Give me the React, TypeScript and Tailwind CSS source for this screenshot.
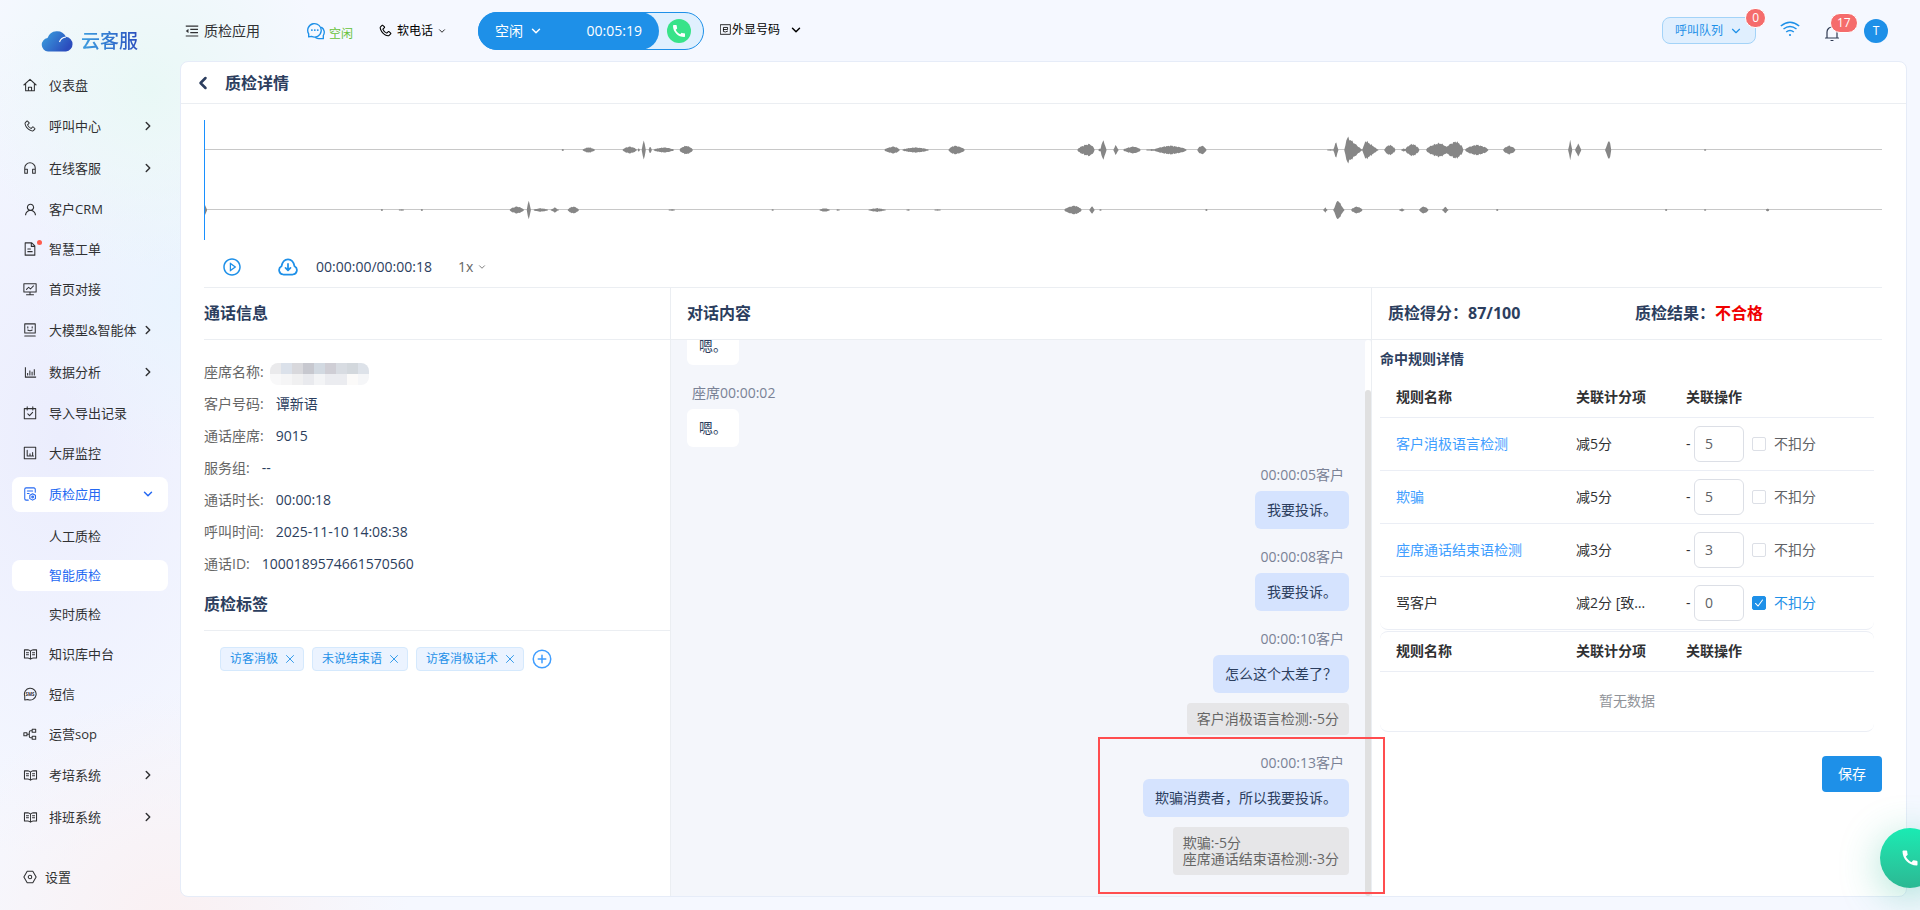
import React, { useState } from 'react';
import { ChevronDown, ChevronLeft, ChevronRight, X } from 'lucide-react';
import {
  AiOutlineBarChart,
  AiOutlineMenuFold,
  AiOutlinePhone,
  AiOutlinePlayCircle,
  AiOutlineRead,
  AiOutlineUser,
} from 'react-icons/ai';
import { MdCall } from 'react-icons/md';

const Svg: React.FC<{ className?: string; children: React.ReactNode }> = ({ className = 'size-[14px]', children }) => (
  <svg
    viewBox="0 0 16 16"
    className={className}
    fill="none"
    stroke="currentColor"
    strokeWidth="1.2"
    strokeLinecap="round"
    strokeLinejoin="round"
    aria-hidden="true"
  >
    {children}
  </svg>
);

const icons = {
  home: (
    <Svg>
      <path d="M1 8 8 1.5 15 8M3 6.8V14.5h10V6.8M6.2 14.5v-4h3.6v4" />
    </Svg>
  ),
  phone: <AiOutlinePhone className="size-[14px] -scale-x-100" />,
  headset: (
    <Svg>
      <path d="M2 14V8a6 6 0 0 1 12 0v6M2 9.5h3V14H2zM11 9.5h3V14h-3z" />
    </Svg>
  ),
  user: <AiOutlineUser className="size-[15px]" />,
  file: (
    <Svg>
      <path d="M2.5 1h7.5l3.5 3.5V15h-11zM9.5 1v4h4M5.5 8h3M5.5 11h5" />
    </Svg>
  ),
  monitor: (
    <Svg>
      <path d="M1 2h14v9.5H1zM4 8.5l2.5-2.5 2 2L12 4.5M8 11.5v3M4 14.5h8" />
    </Svg>
  ),
  robot: (
    <Svg>
      <path d="M2 1h12v10.5H2zM2 14.8h12M5.5 4.2v1.4M10.5 4.2v1.4M5.5 8q2.5 1.6 5 0" />
    </Svg>
  ),
  chart: <AiOutlineBarChart className="size-[15px]" />,
  calendar: (
    <Svg>
      <path d="M1.5 3h13v11.5h-13zM4.8 1v3.5M11.2 1v3.5M5.5 9l2 2 3.5-3.8" />
    </Svg>
  ),
  screen: (
    <Svg>
      <path d="M1.5 1.5h13v13h-13zM4.8 5v6.5M8 9v2.5M11 7.5v4M4.8 11.5H12" />
    </Svg>
  ),
  quality: (
    <Svg>
      <path d="M6 15H3.5a1.5 1.5 0 0 1-1.5-1.5v-11A1.5 1.5 0 0 1 3.5 1h9A1.5 1.5 0 0 1 14 2.5V6M5 4.5h6M5 7.5h2" />
      <path d="m11 7.8 3.2 1.7v3.8L11 15l-3.200-1.700V9.500z" />
      <circle cx="11" cy="11.4" r="1" />
    </Svg>
  ),
  book: <AiOutlineRead className="size-[15px]" />,
  sms: (
    <Svg>
      <path d="M2 14.800V10.500A6.700 6.700 0 1 1 5.500 14.300z" />
      <text x="8" y="10" fontSize="5" fontWeight="700" textAnchor="middle" fill="currentColor" stroke="none">
        SMS
      </text>
    </Svg>
  ),
  flow: (
    <Svg>
      <path d="M1 6.500h3.500V10H1zM10.500 2.500H14.500V6h-4zM10.500 10.500H14.500V14h-4zM4.500 8.200h2.700M10.500 4.200H8.700Q7.200 4.200 7.200 6v4.500q0 1.800 1.500 1.800h1.800" />
    </Svg>
  ),
};

type MenuItem = {
  name: string;
  icon: keyof typeof icons;
  group?: boolean;
  dot?: boolean;
  children?: string[];
};

const menu: MenuItem[] = [
  { name: '仪表盘', icon: 'home' },
  { name: '呼叫中心', icon: 'phone', group: true },
  { name: '在线客服', icon: 'headset', group: true },
  { name: '客户CRM', icon: 'user' },
  { name: '智慧工单', icon: 'file', dot: true },
  { name: '首页对接', icon: 'monitor' },
  { name: '大模型&智能体', icon: 'robot', group: true },
  { name: '数据分析', icon: 'chart', group: true },
  { name: '导入导出记录', icon: 'calendar' },
  { name: '大屏监控', icon: 'screen' },
  { name: '质检应用', icon: 'quality', group: true, children: ['人工质检', '智能质检', '实时质检'] },
  { name: '知识库中台', icon: 'book' },
  { name: '短信', icon: 'sms' },
  { name: '运营sop', icon: 'flow' },
  { name: '考培系统', icon: 'book', group: true },
  { name: '排班系统', icon: 'book', group: true },
];

const callInfo = [
  ['客户号码:', '谭新语'],
  ['通话座席:', '9015'],
  ['服务组:', '--'],
  ['通话时长:', '00:00:18'],
  ['呼叫时间:', '2025-11-10 14:08:38'],
  ['通话ID:', '1000189574661570560'],
];

const messages = [
  { agent: true, time: '', text: '嗯。' },
  { agent: true, time: '00:00:02', text: '嗯。' },
  { agent: false, time: '00:00:05', text: '我要投诉。' },
  { agent: false, time: '00:00:08', text: '我要投诉。' },
  { agent: false, time: '00:00:10', text: '怎么这个太差了？', notes: ['客户消极语言检测:-5分'] },
  {
    agent: false,
    time: '00:00:13',
    text: '欺骗消费者，所以我要投诉。',
    notes: ['欺骗:-5分', '座席通话结束语检测:-3分'],
  },
];

const initialRules = [
  { name: '客户消极语言检测', score: '减5分', value: '5', skip: false, link: true },
  { name: '欺骗', score: '减5分', value: '5', skip: false, link: true },
  { name: '座席通话结束语检测', score: '减3分', value: '3', skip: false, link: true },
  { name: '骂客户', score: '减2分 [致命项]', value: '0', skip: true, link: false },
];

// [start, width, amplitude, peak position 0..1]
type Burst = [number, number, number, number];

const agentWave: Burst[] = [
  [357, 2, 1, 0.5], [378, 12, 3, 0.5], [418, 14, 4, 0.5], [433, 2, 2, 0.5], [437, 4, 13, 0.5], [444, 3, 5, 0.5],
  [449, 20, 3, 0.5], [475, 13, 5, 0.5], [680, 15, 4, 0.6], [698, 26, 3, 0.5], [744, 16, 5, 0.4],
  [873, 17, 7, 0.7], [894, 3, 2, 0.5], [896, 6, 13, 0.4], [909, 5, 6, 0.4], [919, 17, 4, 0.6], [942, 12, 1, 0.5],
  [950, 32, 5, 0.5], [993, 9, 5, 0.5], [1123, 6, 1, 0.5], [1129, 5, 10, 0.5], [1140, 18, 15, 0.15],
  [1158, 16, 11, 0.2], [1180, 11, 6, 0.5], [1197, 5, 2, 0.5], [1201, 14, 7, 0.5], [1222, 22, 8, 0.6],
  [1241, 18, 10, 0.6], [1261, 23, 6, 0.5], [1299, 12, 5, 0.5], [1364, 4, 12, 0.5], [1371, 6, 8, 0.5],
  [1401, 6, 13, 0.7], [1500, 2, 1, 0.5],
];

const customerWave: Burst[] = [
  [0, 2, 6, 0], [176, 2, 1, 0.5], [194, 5, 1, 0.5], [216, 2, 1, 0.5], [305, 14, 4, 0.5], [322, 4, 12, 0.5],
  [329, 14, 2, 0.5], [346, 8, 3, 0.5], [363, 11, 4, 0.5], [464, 6, 1, 0.5], [567, 2, 1, 0.5], [615, 10, 2, 0.5],
  [632, 3, 1, 0.5], [664, 17, 2, 0.5], [702, 3, 1, 0.5], [730, 6, 1, 0.5], [860, 17, 5, 0.6], [885, 5, 5, 0.5],
  [895, 2, 1, 0.5], [1001, 2, 1, 0.5], [1119, 4, 3, 0.5], [1129, 11, 12, 0.4], [1147, 11, 4, 0.5],
  [1195, 5, 2, 0.5], [1215, 9, 4, 0.5], [1238, 6, 4, 0.5], [1292, 2, 1, 0.5], [1461, 2, 1, 0.5],
  [1500, 2, 1, 0.5], [1562, 3, 2, 0.5],
];

const wavePath = (bursts: Burst[], mid: number) =>
  bursts
    .map(([start, width, amp, peak]) => {
      const top: string[] = [];
      const bottom: string[] = [];
      for (let i = 0; i <= width; i++) {
        const t = i / width;
        const slope = t < peak ? t / peak : (1 - t) / (1 - peak || 1);
        const env = width > 8 && amp < 11 ? Math.sqrt(slope) : slope;
        const noise = 0.85 + 0.15 * Math.sin((start + i) * 2.3) * Math.cos((start + i) * 0.7);
        const h = Math.max(0.5, amp * env * noise);
        top.push(`${start + i} ${mid - h}`);
        bottom.unshift(`${start + i} ${mid + h}`);
      }
      return `M${top.concat(bottom).join('L')}Z`;
    })
    .join('');

const Waveform: React.FC = () => (
  <div className="h-[120px] border-l border-[#1890ff]">
    <svg viewBox="0 0 1678 120" preserveAspectRatio="none" className="h-full w-full" aria-hidden="true">
      <path d="M0 29.500H1678M0 89.500H1678" stroke="#c8c8c8" strokeWidth="1" />
      <path d={wavePath(agentWave, 30)} fill="#868686" />
      <path d={wavePath(customerWave, 90)} fill="#868686" />
    </svg>
  </div>
);

const Sidebar: React.FC = () => (
  <aside className="flex w-[180px] shrink-0 flex-col px-3 pb-[13px]">
    <div className="flex h-[65px] items-center gap-2 pt-4 pl-[29px]">
      <svg viewBox="0 0 32 22" className="h-[22px] w-8" aria-hidden="true">
        <defs>
          <linearGradient id="cloud" x1="0" y1="0" x2="1" y2="0.5">
            <stop offset="0" stopColor="#3ba3e0" />
            <stop offset="1" stopColor="#2b4cbd" />
          </linearGradient>
        </defs>
        <path
          d="M7 21.500A6.800 6.800 0 0 1 6.500 8 10 10 0 0 1 25 6.800 7.400 7.400 0 0 1 25 21.500z"
          fill="url(#cloud)"
        />
        <path d="M18.500 12Q20 7.500 25 7" stroke="#fff" strokeWidth="1.2" fill="none" />
      </svg>
      <span className="bg-linear-to-r from-[#3f9fe0] to-[#2c4fbe] bg-clip-text text-[19px] leading-6 font-medium text-transparent">
        云客服
      </span>
    </div>
    <nav className="text-[13px] text-[#303133]">
      {menu.map((item) => (
        <div key={item.name}>
          <div className={item.group ? 'flex h-[42px] items-center' : 'flex h-10 items-center'}>
            <button
              type="button"
              className={
                item.children
                  ? 'flex h-[35px] w-full items-center rounded-lg bg-white pl-[11px] text-[#2468f2]'
                  : 'flex h-[35px] w-full items-center rounded-lg pl-[11px]'
              }
            >
              <span className="relative flex w-[26px] shrink-0">
                {icons[item.icon]}
                {item.dot && <i className="absolute -top-0.5 left-[14px] size-[5px] rounded-full bg-[#ff5b4c]" />}
              </span>
              <span className="whitespace-nowrap">{item.name}</span>
              {item.group &&
                (item.children ? (
                  <ChevronDown className="mr-[13px] ml-auto size-3.5" strokeWidth={2.5} />
                ) : (
                  <ChevronRight className="mr-[13px] ml-auto size-3.5 shrink-0" strokeWidth={2.5} />
                ))}
            </button>
          </div>
          {item.children && (
            <div className="flex flex-col gap-2 pt-1.5 pb-1">
              {item.children.map((child) => (
                <button
                  key={child}
                  type="button"
                  className={
                    child === '智能质检'
                      ? 'h-[31px] rounded-lg bg-white pl-[37px] text-left text-[#2468f2]'
                      : 'h-[31px] rounded-lg pl-[37px] text-left'
                  }
                >
                  {child}
                </button>
              ))}
            </div>
          )}
        </div>
      ))}
    </nav>
    <button type="button" className="mt-auto flex h-10 items-center gap-2 pl-[11px] text-[13px] text-[#303133]">
      <Svg>
        <path d="M4.800 1.500h6.400L15 8l-3.800 6.500H4.800L1 8z" />
        <circle cx="8" cy="8" r="2" />
      </Svg>
      设置
    </button>
  </aside>
);

const TopBar: React.FC = () => (
  <header className="flex h-[61px] shrink-0 items-center text-xs text-black">
    <button type="button" className="ml-1 flex w-[123px] items-center gap-1 text-sm text-[#303133]">
      <AiOutlineMenuFold className="size-4" />
      质检应用
    </button>
    <div className="flex w-[71px] items-center gap-1 text-[#67c23a]">
      <Svg className="size-[18px] text-[#1e90e8]">
        <path d="M1.500 13.200V10.500A6 6 0 1 1 4 12.800zM13 4.800A5.200 5.200 0 0 1 14.500 12V14.800H11A5 5 0 0 1 7.800 14" />
        <path d="M4.300 7.200h.1M6.900 7.200h.1M9.500 7.200h.1" strokeWidth="1.6" />
      </Svg>
      <span className="pt-1.5">空闲</span>
    </div>
    <button type="button" className="flex w-[100px] items-center gap-1">
      <AiOutlinePhone className="size-[15px] -scale-x-100" />
      软电话
      <ChevronDown className="size-2.5" />
    </button>
    <div className="flex h-[38px] w-[226px] items-center rounded-full border border-[#1e90e8] bg-[#e0f0fe]">
      <button
        type="button"
        className="-ml-px flex h-[38px] w-[181px] items-center rounded-full bg-[#1e90e8] px-[17px] text-sm text-white"
      >
        空闲
        <ChevronDown className="ml-1.5 size-3.5" strokeWidth={2.5} />
        <span className="ml-auto">00:05:19</span>
      </button>
      <button
        type="button"
        aria-label="拨打"
        className="ml-2 flex size-6 items-center justify-center rounded-full bg-[#38e389] text-white"
      >
        <MdCall className="size-4" />
      </button>
    </div>
    <button type="button" className="ml-4 flex items-center gap-px pb-0.5">
      <Svg className="size-[11px]">
        <path d="M1 1h14v14H1zM5 8h6V5H5v6q3 1.500 6-.5" />
      </Svg>
      外显号码
      <ChevronDown className="ml-2 size-3.5" strokeWidth={2.5} />
    </button>

    <div className="mr-[19px] ml-auto flex items-center">
      <button
        type="button"
        className="relative flex h-[27px] w-[94px] items-center justify-between rounded-lg border border-[#a3d3f8] bg-[#e0effe] px-3 text-[#1e90e8]"
      >
        呼叫队列
        <ChevronDown className="size-3.5" />
        <span className="absolute -top-[10px] -right-[11px] flex h-5 items-center rounded-full border border-white bg-[#f56c6c] px-1.5 text-white">
          0
        </span>
      </button>
      <svg viewBox="0 0 20 16" className="mb-1 ml-6 h-4 w-5" fill="none" stroke="#1e90e8" strokeWidth="1.5" aria-label="网络">
        <path d="M.8 5Q10-2.500 19.200 5M3.500 8Q10 2.800 16.500 8M6.200 11Q10 8 13.800 11" />
        <circle cx="10" cy="14" r="1.1" fill="#1e90e8" stroke="none" />
      </svg>
      <button type="button" aria-label="通知" className="relative ml-6 pt-1">
        <Svg className="size-4 text-[#2f3a52]">
          <path d="M1.500 13h13M3 13V7a5 5 0 0 1 10 0v6M7 15.500h2" />
        </Svg>
        <span className="absolute -top-2 left-1.5 flex h-5 items-center rounded-full border border-white bg-[#f56c6c] px-1.5 text-white">
          17
        </span>
      </button>
      <span className="ml-6 flex size-6 items-center justify-center rounded-full bg-[#1e90e8] text-white">T</span>
    </div>
  </header>
);

const CallInfo: React.FC = () => (
  <section className="w-[467px] shrink-0 border-r border-[#ebeef2]">
    <h2 className="flex h-[52px] items-center border-b border-[#ebeef2] pb-0.5 text-base font-bold">通话信息</h2>
    <dl className="pt-4">
      <div className="flex h-8 items-center">
        <dt className="text-[#666]">座席名称:</dt>
        <dd className="mt-1 ml-1.5 grid grid-cols-9 overflow-hidden rounded-lg" aria-label="已隐藏">
          <i className="h-[11px] w-[11px] bg-[#eaeaec]" />
          <i className="bg-[#dbe1ea]" />
          <i className="bg-[#d8d8dc]" />
          <i className="bg-[#c7c8cf]" />
          <i className="bg-[#d2d9e1]" />
          <i className="bg-[#cfced5]" />
          <i className="bg-[#d8dce2]" />
          <i className="bg-[#d3d8dd]" />
          <i className="bg-[#dde2e9]" />
          <i className="h-[11px] bg-[#f8f8f9]" />
          <i className="bg-[#f5f5f6]" />
          <i className="bg-[#f0f0f1]" />
          <i className="bg-[#e9eaee]" />
          <i className="bg-[#f3f4f6]" />
          <i className="bg-[#ebecf0]" />
          <i className="bg-[#ebecf0]" />
          <i className="bg-[#fbfaf9]" />
          <i className="bg-[#f5f6f8]" />
        </dd>
      </div>
      {callInfo.map(([label, value]) => (
        <div key={label} className="flex h-8 items-center">
          <dt className="text-[#666]">{label}</dt>
          <dd className="ml-3">{value}</dd>
        </div>
      ))}
    </dl>
    <h2 className="flex h-[51px] items-center border-b border-[#ebeef2] pb-0.5 text-base font-bold">质检标签</h2>
    <div className="flex flex-wrap items-center gap-2 px-4 py-4">
      {['访客消极', '未说结束语', '访客消极话术'].map((tag) => (
        <span
          key={tag}
          className="flex h-6 items-center gap-[5px] rounded border border-[#d5e9fd] bg-[#ebf3ff] pr-[6px] pl-[9px] text-xs text-[#1e90e8]"
        >
          {tag}
          <button type="button" aria-label={`删除${tag}`}>
            <X className="size-3.5" strokeWidth={1.5} />
          </button>
        </span>
      ))}
      <button type="button" aria-label="添加标签" className="text-[#409eff]">
        <Svg className="size-5">
          <circle cx="8" cy="8" r="7" />
          <path d="M8 5v6M5 8h6" />
        </Svg>
      </button>
    </div>
  </section>
);

const Dialog: React.FC = () => (
  <section className="relative flex min-w-0 flex-1 flex-col border-r border-[#ebeef2]">
    <h2 className="flex h-[52px] shrink-0 items-center border-b border-[#ebeef2] pb-0.5 pl-4 text-base font-bold">
      对话内容
    </h2>
    <div className="flex min-h-0 flex-1 bg-[#f4f6fb]">
      <div className="flex flex-1 flex-col justify-end overflow-hidden px-4 pb-[21px]">
        {messages.map((msg, index) => (
          <div
            key={index}
            className={msg.agent ? 'flex flex-col items-start pt-[18px]' : 'flex flex-col items-end pt-[18px]'}
          >
            {msg.time && (
              <div className="mb-1.5 px-[5px] leading-5 text-[#7a8296]">
                {msg.agent ? `座席${msg.time}` : `${msg.time}客户`}
              </div>
            )}
            <p
              className={
                msg.agent
                  ? 'flex h-[38px] items-center rounded-md bg-white px-3'
                  : 'flex h-[38px] items-center rounded-md bg-[#d5e3fe] px-3'
              }
            >
              {msg.text}
            </p>
            {msg.notes && (
              <div className="mt-2.5 rounded bg-[#e6e6e8] px-2.5 py-2 leading-4 text-[#666]">
                {msg.notes.map((note) => (
                  <p key={note}>{note}</p>
                ))}
              </div>
            )}
          </div>
        ))}
      </div>
      <div className="flex w-1.5 flex-col rounded-full bg-white pt-[50px]">
        <div className="flex-1 rounded-full bg-[#e0e0e0]" />
      </div>
    </div>
    {/* highlighted hit */}
    <div className="absolute -right-[14px] bottom-0.5 z-10 h-[157px] w-[287px] border-2 border-[#ff4d4f]" />
  </section>
);

const TableHead: React.FC = () => (
  <thead>
    <tr className="h-[39px] border-b border-[#ebeef5] text-left">
      <th className="w-[180px] pl-4 font-bold">规则名称</th>
      <th className="w-[110px] pl-4 font-bold">关联计分项</th>
      <th className="pl-4 font-bold">关联操作</th>
    </tr>
  </thead>
);

const Rules: React.FC = () => {
  const [rules, setRules] = useState(initialRules);

  const update = (index: number, patch: Partial<(typeof initialRules)[number]>) => {
    setRules((prev) => prev.map((rule, i) => (i === index ? { ...rule, ...patch } : rule)));
  };

  return (
    <section className="w-[510px] shrink-0">
      <div className="grid h-[52px] grid-cols-2 items-center border-b border-[#ebeef2] pb-0.5 pl-4 text-base font-bold">
        <p>质检得分：87/100</p>
        <p>
          质检结果：<span className="text-[#f00000]">不合格</span>
        </p>
      </div>
      <div className="px-2">
        <h3 className="flex h-[38px] items-center font-bold">命中规则详情</h3>
        <div className="overflow-hidden rounded-lg border-b border-[#ebeef5]">
          <table className="w-full table-fixed text-[#303133]">
            <TableHead />
            <tbody>
              {rules.map((rule, index) => (
                <tr key={rule.name} className="h-[53px] border-b border-[#ebeef5] last:border-b-0">
                  <td className="pl-4">
                    {rule.link ? (
                      <a href="#rule" className="text-[#409eff]">
                        {rule.name}
                      </a>
                    ) : (
                      rule.name
                    )}
                  </td>
                  <td className="truncate pr-5 pl-4">{rule.score}</td>
                  <td className="pl-4">
                    <div className="flex items-center">
                      <span className="w-2 shrink-0">-</span>
                      <input
                        type="text"
                        aria-label={`${rule.name}扣分`}
                        value={rule.value}
                        onChange={(e) => update(index, { value: e.target.value })}
                        className="h-9 w-[50px] rounded-md border border-[#dcdfe6] bg-white px-2.5 text-[#606266] outline-none"
                      />
                      <label className="ml-2 flex items-center gap-2 text-[#606266] has-checked:text-[#1e90e8]">
                        <span className="relative flex">
                          <input
                            type="checkbox"
                            checked={rule.skip}
                            onChange={(e) => update(index, { skip: e.target.checked })}
                            className="peer size-3.5 appearance-none rounded-xs border border-[#dcdfe6] bg-white checked:border-[#1e90e8] checked:bg-[#1e90e8]"
                          />
                          <Svg className="pointer-events-none absolute inset-0 hidden size-3.5 text-white peer-checked:block">
                            <path d="m4 8.500 3 3 5-7" />
                          </Svg>
                        </span>
                        不扣分
                      </label>
                    </div>
                  </td>
                </tr>
              ))}
            </tbody>
          </table>
        </div>
        <div className="mt-px overflow-hidden rounded-lg border-y border-[#ebeef5]">
          <table className="w-full table-fixed text-[#303133]">
            <TableHead />
            <tbody>
              <tr className="h-[60px] text-center text-[#909399]">
                <td colSpan={3}>暂无数据</td>
              </tr>
            </tbody>
          </table>
        </div>
      </div>
      <div className="mt-6 flex justify-end">
        <button type="button" className="h-9 w-[60px] rounded bg-[#1e90e8] text-white">
          保存
        </button>
      </div>
    </section>
  );
};

const App: React.FC = () => {
  return (
    <div className="relative flex h-screen overflow-hidden bg-[#f5f8ff] bg-[radial-gradient(circle_at_150px_90px,#e9f8f6_0px,#e9f8f600_180px),radial-gradient(circle_at_170px_930px,#faf0f2_0px,#faf0f200_240px),radial-gradient(circle_at_190px_300px,#e9f4fe_0px,#e9f4fe00_160px),radial-gradient(ellipse_260px_420px_at_60px_440px,#ebedfd_0px,#ebedfd00_100%)] font-['Open_Sans','Noto_Sans_CJK_SC',sans-serif] text-sm text-[#2c3e5e]">
      <Sidebar />
      <div className="flex min-w-0 flex-1 flex-col pr-[13px] pb-[13px]">
        <TopBar />
        <main className="flex min-h-0 flex-1 flex-col overflow-hidden rounded-lg border border-[#e6ecf8] bg-white">
          <div className="flex h-[42px] shrink-0 items-center border-b border-[#ebeef2]">
            <button type="button" aria-label="返回" className="ml-3 flex w-8">
              <ChevronLeft className="size-5" strokeWidth={3} />
            </button>
            <h1 className="text-base font-bold">质检详情</h1>
          </div>
          <div className="flex min-h-0 flex-1 flex-col pt-4 pr-6 pl-[23px]">
            <Waveform />
            <div className="flex h-[47px] shrink-0 items-center pt-1.5">
              <button type="button" aria-label="播放" className="ml-[18px] text-[#1e90e8]">
                <AiOutlinePlayCircle className="size-5" />
              </button>
              <button type="button" aria-label="下载" className="ml-9 text-[#1e90e8]">
                <Svg className="size-5">
                  <path
                    d="M4.200 14A3.500 3.500 0 0 1 2.800 7.400C3.500 3.600 5.500 1.800 8 1.800s4.500 1.800 5.200 5.600A3.500 3.500 0 0 1 11.800 14z"
                    strokeWidth="1.4"
                  />
                  <path d="M8 5.500v5M6 8.700l2 2 2-2" strokeWidth="1.4" />
                </Svg>
              </button>
              <span className="ml-[18px]">00:00:00/00:00:18</span>
              <button type="button" className="ml-[26px] flex items-center gap-1 text-[#666]">
                1x
                <ChevronDown className="size-2.5" />
              </button>
            </div>
            <div className="flex min-h-0 flex-1 border-t border-[#ebeef2]">
              <CallInfo />
              <Dialog />
              <Rules />
            </div>
          </div>
        </main>
      </div>
      <button
        type="button"
        aria-label="电话"
        className="absolute -right-5 bottom-[22px] z-20 flex size-[60px] items-center justify-center rounded-full bg-linear-to-b from-[#19ebb3] to-[#2bb893] text-white shadow-[0_8px_40px_#2bb89366]"
      >
        <MdCall className="size-5" />
      </button>
    </div>
  );
};

export default App;
